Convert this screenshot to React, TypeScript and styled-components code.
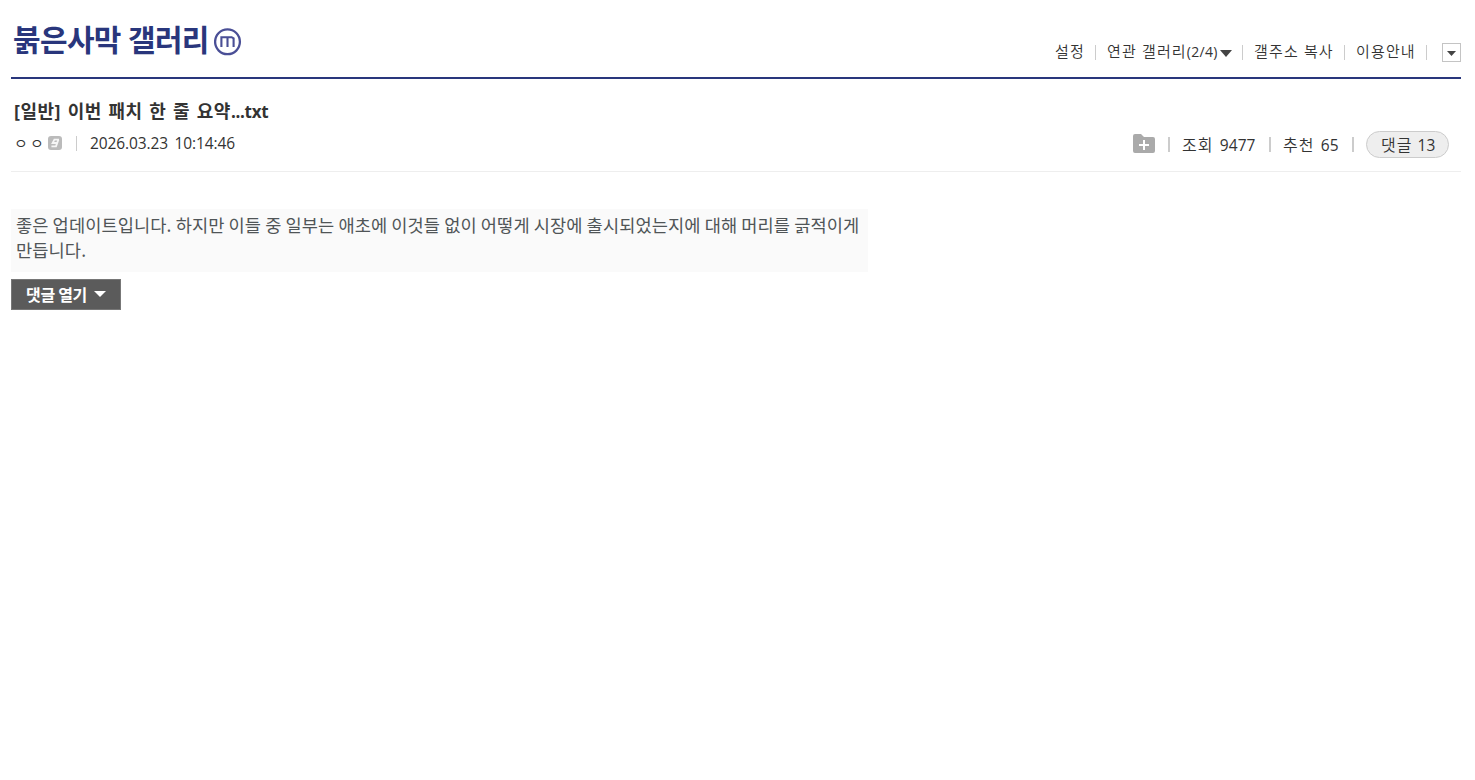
import React from "react";
import { createGlobalStyle, styled } from "styled-components";

const GlobalStyle = createGlobalStyle`
  * {
    box-sizing: border-box;
  }
  body {
    margin: 0;
    background: #ffffff;
    color: #333333;
    font-family: "Open Sans", "Noto Sans CJK KR", sans-serif;
  }
`;

const Root = styled.main`
  width: 1450px;
  margin-left: 11px;
`;
const Header = styled.header`
  display: flex;
  justify-content: space-between;
  height: 79px;
  border-bottom: 2px solid #29367c;
`;
const Brand = styled.div`
  display: flex;
  align-items: flex-start;
  padding: 18px 0 0 2px;
`;
const GalleryName = styled.h1`
  width: 201px;
  margin: 0;
  color: #29367c;
  font-size: 30px;
  font-weight: 700;
  line-height: 44px;
  letter-spacing: -0.65px;
  white-space: nowrap;
`;
const MinorMark = styled.svg`
  margin-top: 10px;
`;
const Menu = styled.nav`
  display: flex;
  align-items: flex-start;
  padding-top: 41px;
`;
const MenuItem = styled.a<{ $width: number }>`
  width: ${({ $width }) => $width}px;
  color: #333333;
  font-size: 15px;
  font-weight: 350;
  line-height: 21px;
  letter-spacing: 1.15px;
  white-space: nowrap;
`;
const MenuCount = styled.span`
  font-size: 14px;
  font-weight: 400;
  letter-spacing: 0.3px;
`;
const Divider = styled.span<{
  $left: number;
  $right: number;
  $top?: number;
  $thick?: boolean;
}>`
  flex: none;
  width: ${({ $thick }) => ($thick ? 2 : 1)}px;
  height: 15px;
  margin: ${({ $top = 4 }) => $top}px ${({ $right }) => $right}px 0
    ${({ $left }) => $left}px;
  background: #cccccc;
`;
const Caret = styled.svg<{ $top?: number }>`
  flex: none;
  margin-top: ${({ $top = 0 }) => $top}px;
`;
const MoreButton = styled.button`
  display: flex;
  align-items: center;
  justify-content: center;
  width: 19px;
  height: 19px;
  margin: 2px 0 0 15px;
  padding: 0;
  background: #ffffff;
  border: 1px solid #c4c4c4;
`;
const PostHead = styled.section`
  height: 93px;
  padding: 19px 0 0 2px;
  border-bottom: 1px solid #eeeeee;
`;
const Title = styled.h2`
  margin: 0 0 0 1px;
  font-size: 18px;
  font-weight: 700;
  line-height: 26px;
  letter-spacing: 0.5px;
  word-spacing: 1.5px;
  white-space: nowrap;
`;
const TitleTail = styled.span`
  font-size: 17px;
  letter-spacing: -0.3px;
`;
const Info = styled.div`
  display: flex;
  justify-content: space-between;
  padding-right: 12px;
`;
const InfoGroup = styled.div`
  display: flex;
  align-items: flex-start;
  padding-top: 6px;
`;
const Writer = styled.span`
  width: 33px;
  padding-left: 1px;
  font-size: 15px;
  font-weight: 350;
  line-height: 24px;
  letter-spacing: 2.2px;
  white-space: nowrap;
`;
const Gonick = styled.svg`
  margin: 5px 0 0 2px;
`;
const DateText = styled.span`
  font-size: 15.5px;
  line-height: 25px;
  letter-spacing: -0.1px;
  word-spacing: 2.5px;
  white-space: nowrap;
`;
const Stat = styled.span<{ $width: number }>`
  width: ${({ $width }) => $width}px;
  padding-top: 2px;
  font-size: 16px;
  font-weight: 350;
  line-height: 24px;
  letter-spacing: 1.1px;
  word-spacing: 0.8px;
  white-space: nowrap;
`;
const Count = styled.span`
  font-size: 15.5px;
  font-weight: 400;
  letter-spacing: 0.1px;
`;
const FolderIcon = styled.svg`
  margin-top: 3px;
`;
const CommentCount = styled.a`
  width: 83px;
  height: 27px;
  padding-left: 14px;
  background: #eeeeee;
  border: 1px solid #cccccc;
  border-radius: 14px;
  font-size: 16px;
  font-weight: 350;
  line-height: 26px;
  letter-spacing: 1px;
  white-space: nowrap;
`;
const Content = styled.p`
  width: 857px;
  height: 63px;
  margin: 37px 0 7px;
  padding: 3px 5px;
  background: #fafafa;
  color: #505557;
  font-family: "Noto Sans CJK KR", sans-serif;
  font-size: 17.6px;
  font-weight: 400;
  line-height: 25px;
  letter-spacing: 0.1px;
  white-space: nowrap;
`;
const OpenComments = styled.button`
  display: flex;
  align-items: center;
  width: 110px;
  height: 31px;
  padding: 0 0 2px 14px;
  background: #5b5b5b;
  border: 1px solid #777777;
  color: #ffffff;
  font-family: "Noto Sans CJK KR", sans-serif;
  font-size: 16px;
  font-weight: 700;
  letter-spacing: -0.3px;
`;
const OpenLabel = styled.span`
  width: 68px;
  text-align: left;
  white-space: nowrap;
`;

const App: React.FC = () => {
  return (
    <>
      <GlobalStyle />
      <Root>
        <Header>
          <Brand>
            <GalleryName>붉은사막 갤러리</GalleryName>
            <MinorMark width="28" height="28" viewBox="0 0 28 28" fill="none">
              <circle cx="13.5" cy="13.8" r="12.4" stroke="#4a4f96" strokeWidth="2.3" />
              <path
                d="M7.4 19V9.2H17.6L19.6 10.4V19M13.5 9.2V19"
                stroke="#4a4f96"
                strokeWidth="2.1"
              />
            </MinorMark>
          </Brand>
          <Menu>
            <MenuItem $width={30}>설정</MenuItem>
            <Divider $left={10} $right={11} />
            <MenuItem $width={113}>
              연관 갤러리<MenuCount>(2/4)</MenuCount>
            </MenuItem>
            <Caret width="12" height="7" viewBox="0 0 12 7" $top={9}>
              <path d="M0 0H12L6 7Z" fill="#444444" />
            </Caret>
            <Divider $left={10} $right={11} />
            <MenuItem $width={80}>갤주소 복사</MenuItem>
            <Divider $left={10} $right={11} />
            <MenuItem $width={60}>이용안내</MenuItem>
            <Divider $left={10} $right={0} />
            <MoreButton aria-label="더보기">
              <Caret width="9" height="5" viewBox="0 0 9 5" $top={1}>
                <path d="M0 0H9L4.5 5Z" fill="#444444" />
              </Caret>
            </MoreButton>
          </Menu>
        </Header>
        <PostHead>
          <Title>
            [일반] 이번 패치 한 줄 요약<TitleTail>...txt</TitleTail>
          </Title>
          <Info>
            <InfoGroup>
              <Writer>ㅇㅇ</Writer>
              <Gonick width="14" height="14" viewBox="0 0 14 14" fill="none">
                <rect width="14" height="14" rx="3" fill="#bbbbbb" />
                <path
                  d="M11 3.6H6.4L4.6 7H8.8M10.4 3.6L8 10.4H3.4"
                  stroke="#f6f6f6"
                  strokeWidth="1.8"
                />
              </Gonick>
              <Divider $left={14} $right={13} $top={5} />
              <DateText>2026.03.23 10:14:46</DateText>
            </InfoGroup>
            <InfoGroup>
              <FolderIcon width="22" height="19" viewBox="0 0 22 19">
                <path
                  d="M2 0H8L11 3H20Q22 3 22 5V17Q22 19 20 19H2Q0 19 0 17V2Q0 0 2 0Z"
                  fill="#aaaaaa"
                />
                <path d="M11 6V16M6 11H16" stroke="#ffffff" strokeWidth="2" />
              </FolderIcon>
              <Divider $left={13} $right={12} $top={6} $thick />
              <Stat $width={74}>
                조회 <Count>9477</Count>
              </Stat>
              <Divider $left={13} $right={12} $top={6} $thick />
              <Stat $width={56}>
                추천 <Count>65</Count>
              </Stat>
              <Divider $left={13} $right={12} $top={6} $thick />
              <CommentCount>
                댓글 <Count>13</Count>
              </CommentCount>
            </InfoGroup>
          </Info>
        </PostHead>
        <Content>
          좋은 업데이트입니다. 하지만 이들 중 일부는 애초에 이것들 없이 어떻게 시장에 출시되었는지에 대해 머리를 긁적이게
          <br />
          만듭니다.
        </Content>
        <OpenComments>
          <OpenLabel>댓글 열기</OpenLabel>
          <Caret width="12" height="6" viewBox="0 0 12 6" $top={1}>
            <path d="M0 0H12L6 6Z" fill="#ffffff" />
          </Caret>
        </OpenComments>
      </Root>
    </>
  );
};

export default App;
